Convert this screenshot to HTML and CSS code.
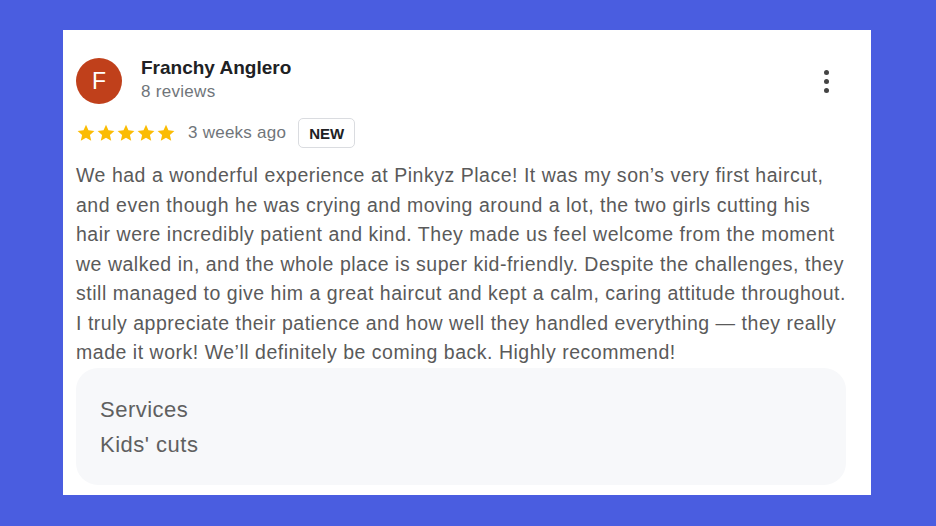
FILE: index.html
```html
<!DOCTYPE html>
<html>
<head>
<meta charset="utf-8">
<link rel="stylesheet" href="styles.css">
</head>
<body>
<div class="page">
  <div class="card">
    <div class="header">
      <div class="avatar">F</div>
      <div class="who">
        <div class="name">Franchy Anglero</div>
        <div class="count">8 reviews</div>
      </div>
      <div class="menu" aria-label="More">
        <span class="dot"></span><span class="dot"></span><span class="dot"></span>
      </div>
    </div>
    <div class="meta">
      <div class="stars">
        <svg viewBox="0 0 24 24" class="star"><path d="M12 2.2l2.95 6.55 7.1.7-5.35 4.8 1.55 7.05L12 17.7l-6.25 3.6 1.55-7.05-5.35-4.8 7.1-.7z"/></svg>
        <svg viewBox="0 0 24 24" class="star"><path d="M12 2.2l2.95 6.55 7.1.7-5.35 4.8 1.55 7.05L12 17.7l-6.25 3.6 1.55-7.05-5.35-4.8 7.1-.7z"/></svg>
        <svg viewBox="0 0 24 24" class="star"><path d="M12 2.2l2.95 6.55 7.1.7-5.35 4.8 1.55 7.05L12 17.7l-6.25 3.6 1.55-7.05-5.35-4.8 7.1-.7z"/></svg>
        <svg viewBox="0 0 24 24" class="star"><path d="M12 2.2l2.95 6.55 7.1.7-5.35 4.8 1.55 7.05L12 17.7l-6.25 3.6 1.55-7.05-5.35-4.8 7.1-.7z"/></svg>
        <svg viewBox="0 0 24 24" class="star"><path d="M12 2.2l2.95 6.55 7.1.7-5.35 4.8 1.55 7.05L12 17.7l-6.25 3.6 1.55-7.05-5.35-4.8 7.1-.7z"/></svg>
      </div>
      <span class="ago">3 weeks ago</span>
      <span class="badge">NEW</span>
    </div>
    <p class="text">We had a wonderful experience at Pinkyz Place! It was my son’s very first haircut, and even though he was crying and moving around a lot, the two girls cutting his hair were incredibly patient and kind. They made us feel welcome from the moment we walked in, and the whole place is super kid-friendly. Despite the challenges, they still managed to give him a great haircut and kept a calm, caring attitude throughout. I truly appreciate their patience and how well they handled everything — they really made it work! We’ll definitely be coming back. Highly recommend!</p>
    <div class="services">
      <div class="svc-label">Services</div>
      <div class="svc-value">Kids' cuts</div>
    </div>
  </div>
</div>
</body>
</html>
```

FILE: styles.css
```css
html, body {
  margin: 0;
  padding: 0;
}
body {
  background: #4a5de0;
  font-family: "Liberation Sans", Arial, sans-serif;
}
.page {
  width: 936px;
  height: 526px;
  padding: 30px 0 0 63px;
  box-sizing: border-box;
}
.card {
  width: 808px;
  height: 465px;
  background: #fff;
  box-sizing: border-box;
  padding: 28px 25px 0 13px;
}
.header {
  display: flex;
  align-items: center;
}
.avatar {
  width: 46px;
  height: 46px;
  border-radius: 50%;
  background: #c0401b;
  color: #fff;
  font-size: 23px;
  display: flex;
  align-items: center;
  justify-content: center;
  flex: none;
}
.who {
  margin-left: 19px;
  flex: 1;
  margin-top: -2px;
}
.name {
  font-weight: bold;
  font-size: 19px;
  line-height: 22px;
  color: #202124;
}
.count {
  font-size: 17px;
  line-height: 22px;
  letter-spacing: 0.3px;
  color: #70757a;
  margin-top: 2px;
}
.menu {
  display: flex;
  flex-direction: column;
  gap: 4px;
  align-items: center;
  width: 20px;
  margin-right: 10px;
}
.dot {
  width: 5px;
  height: 5px;
  border-radius: 50%;
  background: #444;
}
.meta {
  display: flex;
  align-items: center;
  margin-top: 14px;
  height: 30px;
}
.stars {
  display: flex;
}
.star {
  width: 20px;
  height: 20px;
  fill: #fbbc04;
}
.ago {
  font-size: 17px;
  letter-spacing: 0.25px;
  color: #70757a;
  margin-left: 12px;
}
.badge {
  margin-left: 12px;
  border: 1px solid #dadce0;
  border-radius: 5px;
  height: 30px;
  box-sizing: border-box;
  padding: 0 10px;
  display: flex;
  align-items: center;
  font-size: 15px;
  font-weight: bold;
  color: #202124;
}
.text {
  margin: 13px 0 0;
  font-size: 19.5px;
  letter-spacing: 0.52px;
  line-height: 29.5px;
  color: #5a5a5a;
}
.services {
  margin-top: 0;
  background: #f7f8fa;
  border-radius: 22px;
  height: 117px;
  box-sizing: border-box;
  padding: 24px 24px;
  font-size: 22px;
  letter-spacing: 0.5px;
  color: #5f6060;
  line-height: 35px;
}
```
